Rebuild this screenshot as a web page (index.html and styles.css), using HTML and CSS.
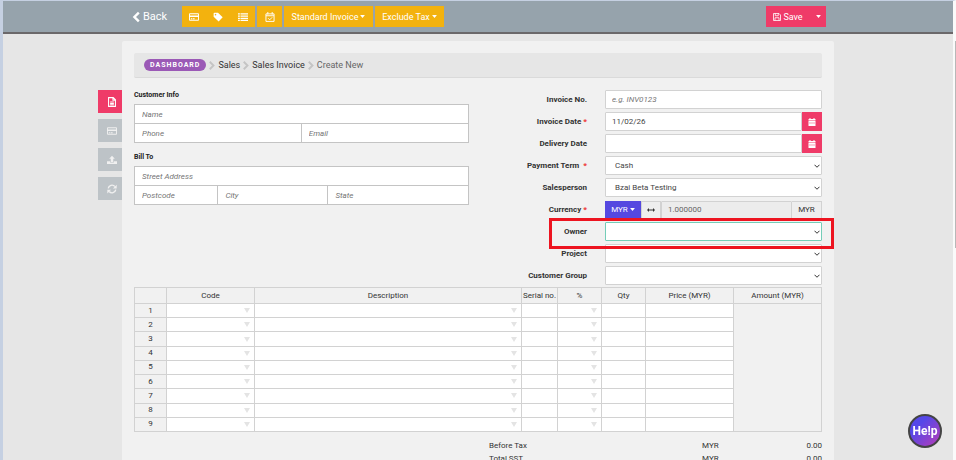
FILE: index.html
```html
<!DOCTYPE html>
<html lang="en">
<head>
<meta charset="utf-8">
<title>Sales Invoice - Create New</title>
<link rel="stylesheet" href="styles.css">
</head>
<body>
<svg class="sprite" aria-hidden="true">
  <symbol id="card" viewBox="0 0 16 16"><path fill-rule="evenodd" d="M1.500 2h13A1.500 1.500 0 0 1 16 3.500v9a1.500 1.500 0 0 1-1.500 1.500h-13A1.500 1.500 0 0 1 0 12.500v-9A1.500 1.500 0 0 1 1.500 2zM1.500 3.500v2h13v-2zM1.500 8v4.500h13V8zM3 10h2v1.500H3zM6 10h3v1.500H6z"/></symbol>
  <symbol id="caret" viewBox="0 0 8 5"><path d="M0 0h8L4 5z"/></symbol>
  <symbol id="calendar" viewBox="0 0 16 16"><path fill-rule="evenodd" d="M3 0h2v2h6V0h2v2h2v3H1V2h2zM1 6h14v10H1zM3 8v1h2V8zM7 8v1h2V8zM11 8v1h2V8zM3 11v1h2v-1zM7 11v1h2v-1zM11 11v1h2v-1z"/></symbol>
  <symbol id="chevron" viewBox="0 0 8 12"><path d="M1 1l5 5-5 5" fill="none" stroke="currentColor" stroke-width="2.500"/></symbol>
  <symbol id="down" viewBox="0 0 12 8"><path d="M1 1.500l5 5 5-5" fill="none" stroke="currentColor" stroke-width="2"/></symbol>
</svg>
<header class="navbar">
  <a class="back" href="#"><svg viewBox="0 0 10 14"><path d="M8.500 1.500L3 7l5.500 5.500" fill="none" stroke="currentColor" stroke-width="3"/></svg>Back</a>
  <div class="tools">
    <div class="group">
      <button class="tool" type="button" aria-label="Payment"><svg><use href="#card"/></svg></button>
      <button class="tool" type="button" aria-label="Tag"><svg viewBox="0 0 16 16"><path fill-rule="evenodd" d="M1 2.500A1.500 1.500 0 0 1 2.500 1H8l7.500 7.500L9 15 1 7.500zM4 3a1.300 1.300 0 1 0 .01 2.600A1.300 1.300 0 0 0 4 3z"/></svg></button>
      <button class="tool" type="button" aria-label="List"><svg viewBox="0 0 16 16"><path d="M0 2h3v2H0zM4 2h12v2H4zM0 5.500h3v2H0zM4 5.500h12v2H4zM0 9h3v2H0zM4 9h12v2H4zM0 12.500h3v2H0zM4 12.500h12v2H4z"/></svg></button>
    </div>
    <button class="tool" type="button" aria-label="Schedule"><svg viewBox="0 0 16 16"><path fill="none" stroke="currentColor" stroke-width="1.500" d="M1.500 3h13v12h-13zM1.500 6h13M4.500 0v4M11.500 0v4M5 10l2.500 2.500L11.500 8.500"/></svg></button>
    <button class="tool wide" type="button">Standard Invoice<svg class="caret"><use href="#caret"/></svg></button>
    <button class="tool tax" type="button">Exclude Tax<svg class="caret"><use href="#caret"/></svg></button>
  </div>
  <div class="save">
    <button type="button"><svg viewBox="0 0 16 16"><path fill="none" stroke="currentColor" stroke-width="1.600" d="M1 1h11l3 3v11H1zM4.500 1v4.500h6V1M4 15V9.500h8V15"/></svg>Save</button>
    <button type="button" aria-label="More save options"><svg class="caret"><use href="#caret"/></svg></button>
  </div>
</header>
<div class="page">
  <nav class="side" aria-label="Sections">
    <a class="tab active" href="#" aria-label="Document"><svg viewBox="0 0 16 16"><path fill="none" stroke="currentColor" stroke-width="1.700" d="M2.500 1H10l3.500 3.500V15h-11zM9.500 1v4h4M5 8h6M5 10.300h6M5 12.500h6"/></svg></a>
    <a class="tab" href="#" aria-label="Payment"><svg><use href="#card"/></svg></a>
    <a class="tab" href="#" aria-label="Upload"><svg viewBox="0 0 16 16"><path d="M8 1l4.500 5H10v5H6V6H3.500zM0 10h5v2h6v-2h5v4.500H0z"/></svg></a>
    <a class="tab" href="#" aria-label="Refresh"><svg viewBox="0 0 16 16"><path fill="none" stroke="currentColor" stroke-width="2.200" d="M2 7a6 6 0 0 1 10.500-3M14 9A6 6 0 0 1 3.500 12"/><path d="M15.500 1v6h-6zM.5 15V9h6z"/></svg></a>
  </nav>
  <main class="panel">
    <nav class="crumbs" aria-label="Breadcrumb">
      <a class="pill" href="#">DASHBOARD</a><svg><use href="#chevron"/></svg>
      <a href="#">Sales</a><svg><use href="#chevron"/></svg>
      <a href="#">Sales Invoice</a><svg><use href="#chevron"/></svg>
      <span>Create New</span>
    </nav>
    <form class="form">
      <div class="customer">
        <h2>Customer Info</h2>
        <div class="box">
          <input class="full" placeholder="Name" aria-label="Name">
          <input class="half" placeholder="Phone" aria-label="Phone"><input class="half" placeholder="Email" aria-label="Email">
        </div>
        <h2>Bill To</h2>
        <div class="box">
          <input class="full" placeholder="Street Address" aria-label="Street Address">
          <input class="postcode" placeholder="Postcode" aria-label="Postcode"><input class="city" placeholder="City" aria-label="City"><input class="state" placeholder="State" aria-label="State">
        </div>
      </div>
      <div class="details">
        <div class="row"><label for="no">Invoice No.</label><input id="no" class="field" placeholder="e.g. INV0123"></div>
        <div class="row"><label for="date">Invoice Date <b>*</b></label><div class="joined"><input id="date" class="field" value="11/02/26"><button type="button" aria-label="Pick invoice date"><svg><use href="#calendar"/></svg></button></div></div>
        <div class="row"><label for="delivery">Delivery Date</label><div class="joined"><input id="delivery" class="field"><button type="button" aria-label="Pick delivery date"><svg><use href="#calendar"/></svg></button></div></div>
        <div class="row"><label for="term">Payment Term &nbsp;<b>*</b></label><div class="select"><select id="term" class="field"><option>Cash</option></select><svg><use href="#down"/></svg></div></div>
        <div class="row"><label for="person">Salesperson</label><div class="select"><select id="person" class="field"><option>Bzai Beta Testing</option></select><svg><use href="#down"/></svg></div></div>
        <div class="row"><label for="rate">Currency <b>*</b></label><div class="currency"><button type="button">MYR<svg class="caret"><use href="#caret"/></svg></button><span class="swap"><svg viewBox="0 0 16 8"><path d="M0 4l4-4v3h8V0l4 4-4 4V5H4v3z"/></svg></span><input id="rate" class="field" value="1.000000" readonly><span class="unit">MYR</span></div></div>
        <div class="row marked"><label for="owner">Owner</label><div class="select"><select id="owner" class="field focus"><option></option></select><svg><use href="#down"/></svg></div></div>
        <div class="row"><label for="project">Project</label><div class="select"><select id="project" class="field"><option></option></select><svg><use href="#down"/></svg></div></div>
        <div class="row"><label for="group">Customer Group</label><div class="select"><select id="group" class="field"><option></option></select><svg><use href="#down"/></svg></div></div>
      </div>
    </form>
    <table class="items">
      <colgroup><col class="c-num"><col class="c-wide"><col><col class="c-serial"><col class="c-small"><col class="c-small"><col class="c-wide"><col class="c-wide"></colgroup>
      <thead><tr><th></th><th>Code</th><th>Description</th><th>Serial no.</th><th>%</th><th>Qty</th><th>Price (MYR)</th><th>Amount (MYR)</th></tr></thead>
      <tbody>
        <tr><th>1</th><td class="drop"></td><td class="drop"></td><td></td><td class="drop"></td><td></td><td></td><td class="amount" rowspan="9"></td></tr>
        <tr><th>2</th><td class="drop"></td><td class="drop"></td><td></td><td class="drop"></td><td></td><td></td></tr>
        <tr><th>3</th><td class="drop"></td><td class="drop"></td><td></td><td class="drop"></td><td></td><td></td></tr>
        <tr><th>4</th><td class="drop"></td><td class="drop"></td><td></td><td class="drop"></td><td></td><td></td></tr>
        <tr><th>5</th><td class="drop"></td><td class="drop"></td><td></td><td class="drop"></td><td></td><td></td></tr>
        <tr><th>6</th><td class="drop"></td><td class="drop"></td><td></td><td class="drop"></td><td></td><td></td></tr>
        <tr><th>7</th><td class="drop"></td><td class="drop"></td><td></td><td class="drop"></td><td></td><td></td></tr>
        <tr><th>8</th><td class="drop"></td><td class="drop"></td><td></td><td class="drop"></td><td></td><td></td></tr>
        <tr><th>9</th><td class="drop"></td><td class="drop"></td><td></td><td class="drop"></td><td></td><td></td></tr>
      </tbody>
    </table>
    <div class="totals">
      <span>Before Tax</span><span>MYR</span><span class="sum">0.00</span>
      <span>Total SST</span><span>MYR</span><span class="sum">0.00</span>
    </div>
  </main>
</div>
<button class="help" type="button">He!p</button>
</body>
</html>
```
FILE: styles.css
```css
*, *::after { box-sizing: border-box; }
body {
  margin: 0;
  height: 100vh;
  overflow: hidden;
  border: solid #c5d0e2;
  border-width: 1px 0 0 3px;
  border-right: 3px solid #fafafa;
  background: #e6e6e6;
  font: 8px/10px Roboto, sans-serif;
  color: #333;
}
body::after { content: ""; position: fixed; top: 9vh; right: 0; width: 1px; height: 45vh; background: #b8b8b8; }
button, input, select { font: inherit; color: inherit; margin: 0; padding: 0; border: 0; border-radius: 0; min-width: 0; }
button { display: flex; align-items: center; justify-content: center; color: #fff; }
a { color: inherit; text-decoration: none; }
svg { fill: currentColor; flex: none; width: 10px; height: 10px; }
.sprite { display: none; }
svg.caret { width: 5px; height: 3px; margin-left: 2px; }

.navbar {
  display: flex;
  align-items: flex-start;
  height: 33px;
  padding: 5px 127px 0 129px;
  background: #96a3ac;
  border-bottom: 2px solid #6b686a;
  color: #fff;
}
.back { display: flex; align-items: center; gap: 3px; width: 50px; height: 21px; font-size: 11px; }
.back svg { width: 8px; height: 12px; }
.tools { display: flex; gap: 2px; }
.group { display: flex; width: 73px; }
.tool { width: 25px; height: 21px; background: #f3b20e; font-size: 9px; }
.group .tool { flex: 1; }
.wide { width: 89px; }
.tax { width: 69px; }
.save { display: flex; margin-left: auto; }
.save button { width: 16px; height: 21px; background: #ef3b68; font-size: 9px; }
.save button:first-child { width: 44px; gap: 2px; }
.save button svg { width: 8px; height: 8px; }
.save button svg.caret { width: 5px; height: 3px; margin: 0; }

.page { display: flex; padding: 7px 119px 0 95px; }
.side { display: flex; flex-direction: column; gap: 6px; width: 24px; padding-top: 49px; }
.tab { display: flex; align-items: center; justify-content: center; height: 23px; padding-left: 4px; background: #bdc3c7; color: #f0f0f0; }
.active { background: #ef3b68; color: #fff; }
.panel { flex: 1; min-width: 0; padding: 12px 12px 40px; background: #f1f1f1; border-radius: 2px 2px 0 0; }

.crumbs { display: flex; align-items: center; gap: 3px; height: 25px; padding-left: 10px; background: #e6e6e6; border-bottom: 1px solid #dadada; border-radius: 2px; font-size: 9px; }
.crumbs svg { width: 6px; height: 9px; color: #c4c4c4; }
.pill { padding: 1px 6px; border-radius: 6px; background: #9b59b6; color: #fff; font-size: 7px; font-weight: 700; letter-spacing: 1px; }
.crumbs span { color: #666; }

.form { display: flex; justify-content: space-between; padding-top: 12px; }
.customer { flex: 0 1 335px; }
h2 { margin: 0 0 4px; font-size: 7px; line-height: 10px; font-weight: 700; color: #222; }
.box { display: flex; flex-wrap: wrap; margin-bottom: 9px; border: solid #c4c4c4; border-width: 1px 0 0 1px; }
.box input { height: 19px; padding-left: 7px; background: #fff; border: solid #c4c4c4; border-width: 0 1px 1px 0; }
::placeholder { color: #757575; font-style: italic; opacity: 1; }
.box .full { width: 100%; }
.box .half { width: 50%; }
.box .postcode { width: 25%; }
.box .city { width: 33%; }
.box .state { flex: 1; }
.details { display: grid; gap: 3px; flex: 0 1 354px; }
.row { position: relative; display: grid; grid-template-columns: 1fr 217px; gap: 18px; align-items: center; height: 19px; }
.row label { text-align: right; font-weight: 700; color: #333; }
.row label b { color: #e33; }
.field { width: 100%; height: 19px; padding: 0 6px; background: #fff; border: 1px solid #d2d2d2; border-radius: 1px; color: #444; }
.joined { display: flex; }
.joined .field { flex: 1; }
.joined button { width: 20px; height: 19px; background: #ef3b68; }
.joined svg { width: 8px; height: 8px; }
.select { position: relative; }
.select .field { display: block; appearance: none; padding-left: 9px; }
.select svg { position: absolute; right: 2px; top: 8px; width: 6px; height: 4px; color: #333; }
.select .focus { border-color: #75cdb8; }
.currency { display: flex; height: 18px; }
.currency button { width: 36px; background: #5548e0; }
.swap { display: flex; align-items: center; justify-content: center; width: 20px; background: #eee; border: 1px solid #d2d2d2; }
.swap svg { width: 8px; height: 4px; }
.currency .field { flex: 1; height: 18px; background: #ececec; color: #666; }
.unit { width: 30px; border: solid #d2d2d2; border-width: 1px 1px 1px 0; background: #eee; text-align: center; line-height: 16px; }
.marked::after { content: ""; position: absolute; z-index: 1; top: -4px; right: -12px; width: 285px; height: 31px; border: 3px solid #ed1420; pointer-events: none; }

.items { width: 100%; height: 145px; margin-top: 2px; table-layout: fixed; border-collapse: collapse; }
.c-num { width: 32px; }
.c-wide { width: 88px; }
.c-serial { width: 36px; }
.c-small { width: 44px; }
.items th, .items td { padding: 0; border: 1px solid #d2d2d2; font-weight: 400; text-align: center; white-space: nowrap; }
.items thead th { height: 16px; }
.items td { background: #fff; }
.items .amount { background: #f1f1f1; }
.drop::after { content: ""; display: block; width: 0; margin: 0 4px 0 auto; border: solid transparent; border-width: 5px 3px 0; border-top-color: #e4e4e4; }
.totals { display: grid; grid-template-columns: 213px 1fr auto; row-gap: 3px; margin-top: 9px; padding-left: 355px; }

.help { position: fixed; right: 14px; bottom: 12px; width: 34px; height: 34px; border: 2px solid #444; border-radius: 50%; background: linear-gradient(135deg, #5548e8 30%, #b83cb8); font: 700 12px/14px Roboto, sans-serif; }
```
